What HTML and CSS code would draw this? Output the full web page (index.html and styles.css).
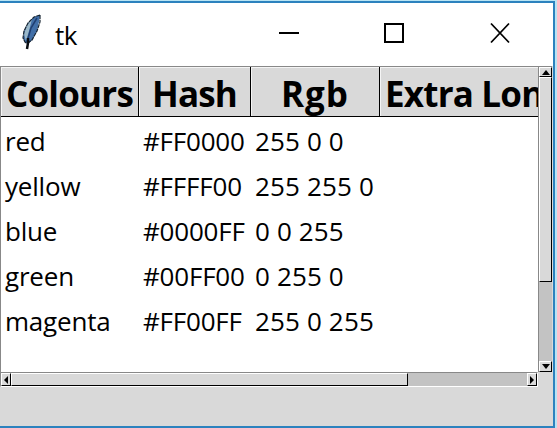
FILE: index.html
```html
<!DOCTYPE html>
<html lang="en">
<head>
<meta charset="utf-8">
<title>tk</title>
<link rel="stylesheet" href="styles.css">
</head>
<body>
<div class="window">
  <header class="titlebar">
    <svg class="feather" width="22" height="38" viewBox="0 0 22 38"><path d="M20 2 14 4 8 10 4 18 3 25 5 29 8 31 12 27 17 18 19 9Z" fill="#416fa8"/><path d="M12 6 7 12 4 21 6 28 9 18Z" fill="#9ab8ca"/><path d="M17 5 11 15 7 29" fill="none" stroke="#203f70" stroke-width="1.5"/><path d="M20 2 14 4 8 10 4 18 3 25 5 29 8 31M20 2V9L17 18 12 27 8 30" fill="none" stroke="#152330" stroke-width="1.2" stroke-dasharray="4 .7"/><path d="M8 25V30L7 36" fill="none" stroke="#080b10" stroke-width="2.5"/></svg>
    <span class="title">tk</span>
    <svg class="controls" width="232" height="22" viewBox="0 0 232 22" fill="none" stroke="#000" stroke-width="2"><path d="M1 11H21M107 2H125V20H107Z"/><path d="M213 1.500 231 20.500M231 1.500 213 20.500" stroke-width="1.8"/></svg>
  </header>
  <div class="body">
    <div class="list">
      <div class="row head"><span><b class="h1">Colours</b></span><span><b class="h2">Hash</b></span><span><b class="h3">Rgb</b></span><span class="extra"><b>Extra Lon</b></span></div>
      <div class="row"><span>red</span><span class="hash">#FF0000</span><span class="rgb">255 0 0</span></div>
      <div class="row"><span>yellow</span><span class="hash">#FFFF00</span><span class="rgb">255 255 0</span></div>
      <div class="row"><span>blue</span><span class="hash">#0000FF</span><span class="rgb">0 0 255</span></div>
      <div class="row"><span>green</span><span class="hash">#00FF00</span><span class="rgb">0 255 0</span></div>
      <div class="row"><span>magenta</span><span class="hash">#FF00FF</span><span class="rgb">255 0 255</span></div>
    </div>
    <div class="vbar">
      <div class="btn"><svg width="8" height="5" viewBox="0 0 8 5"><path d="M4 0 8 5H0Z"/></svg></div>
      <div class="thumb"></div>
      <div class="trough"></div>
      <div class="btn"><svg width="8" height="5" viewBox="0 0 8 5"><path d="M4 5 8 0H0Z"/></svg></div>
    </div>
    <div class="hbar">
      <div class="btn"><svg width="4" height="8" viewBox="0 0 4 8"><path d="M0 4 4 0V8Z"/></svg></div>
      <div class="thumb"></div>
      <div class="trough"></div>
      <div class="btn"><svg width="4" height="8" viewBox="0 0 4 8"><path d="M4 4 0 0V8Z"/></svg></div>
    </div>
  </div>
</div>
</body>
</html>
```
FILE: styles.css
```css
* { box-sizing: border-box; }
body { margin: 0; overflow: hidden; background: #b8e4f4; font-family: "Open Sans", "Noto Sans", sans-serif; color: #000; }
.window { width: 555px; height: 427px; margin-top: 1px; background: #d9d9d9; border: solid #2c82be; border-width: 2px 2px 2px 0; }
.titlebar { height: 63px; display: flex; align-items: center; padding-left: 20px; background: #fff; }
.feather { flex: none; margin-right: 13px; margin-top: -5px; }
.title { width: 223px; font-size: 26px; line-height: 36px; letter-spacing: -.5px; margin-top: 1px; }
.controls { flex: none; margin-top: -3px; }
.body { display: grid; grid-template-columns: 538px 14px; grid-template-rows: 306px 15px; }
.list { background: #fff; border: solid #888; border-width: 1px 0 0 1px; overflow: hidden; }
.row { display: grid; grid-template-columns: 138px 112px 129px 158px; height: 45px; line-height: 45px; font-size: 26px; white-space: pre; }
.row span { padding-left: 4px; letter-spacing: -.2px; }
.row .hash { letter-spacing: -.2px; }
.row .rgb { letter-spacing: .15px; }
.head { height: 50px; margin-bottom: 2px; background: #d9d9d9; border-bottom: 1px solid #000; font-size: 35px; line-height: 53px; text-align: center; }
.head span { padding: 0; border: solid #000; border-width: 0 1px 0 0; box-shadow: inset 1px 1px #f5f5f5; overflow: hidden; }
.head .extra { text-align: left; padding-left: 5px; border: 0; }
.head b { letter-spacing: -.8px; }
.head .h3 { letter-spacing: 1px; }
.btn, .thumb { background: #d9d9d9; border: 1px solid #fff; border-right-color: #000; border-bottom-color: #000; }
.trough { background: #c3c3c3; }
.btn { display: flex; align-items: center; justify-content: center; }
.btn svg { display: block; flex: none; }
.vbar { display: grid; grid-template-rows: 10px 205px 79px 11px; border: solid #888; border-width: 1px 0 0 1px; }
.hbar { display: grid; grid-template-columns: 10px 397px 119px 10px; border: 1px solid #888; border-right-color: #fff; border-bottom-color: #fff; }
```
